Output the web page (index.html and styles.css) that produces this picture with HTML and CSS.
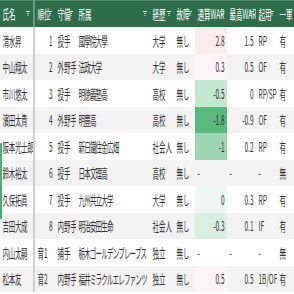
FILE: index.html
```html
<!DOCTYPE html>
<html lang="ja">
<head>
<meta charset="utf-8">
<link rel="stylesheet" href="styles.css">
</head>
<body>
<div class="sheet">
  <div class="row head">
    <div class="c c1">氏名<i class="f"></i></div>
    <div class="c c2">順位<i class="f"></i></div>
    <div class="c c3">守備<i class="f"></i></div>
    <div class="c c4">所属<i class="f"></i></div>
    <div class="c c5">経歴<i class="f"></i></div>
    <div class="c c6">故障<i class="f"></i></div>
    <div class="c c7">通算WAR<i class="f"></i></div>
    <div class="c c8">最高WAR<i class="f"></i></div>
    <div class="c c9">起用<i class="f"></i></div>
    <div class="c c10">一軍</div>
  </div>
  <div class="row">
    <div class="c c1">清水昇</div><div class="c c2 r">1</div><div class="c c3">投手</div><div class="c c4">國學院大學</div><div class="c c5">大学</div><div class="c c6">無し</div><div class="c c7 r p1">2.8</div><div class="c c8 r">1.5</div><div class="c c9">RP</div><div class="c c10">有</div>
  </div>
  <div class="row alt">
    <div class="c c1">中山翔太</div><div class="c c2 r">2</div><div class="c c3">外野手</div><div class="c c4">法政大学</div><div class="c c5">大学</div><div class="c c6">無し</div><div class="c c7 r p2">0.3</div><div class="c c8 r">0.5</div><div class="c c9">OF</div><div class="c c10">有</div>
  </div>
  <div class="row">
    <div class="c c1">市川悠太</div><div class="c c2 r">3</div><div class="c c3">投手</div><div class="c c4">明徳義塾高</div><div class="c c5">高校</div><div class="c c6">無し</div><div class="c c7 r g2">-0.5</div><div class="c c8 r">0</div><div class="c c9">RP/SP</div><div class="c c10">有</div>
  </div>
  <div class="row alt">
    <div class="c c1">濱田太貴</div><div class="c c2 r">4</div><div class="c c3">外野手</div><div class="c c4">明豊高</div><div class="c c5">高校</div><div class="c c6">無し</div><div class="c c7 r g4">-1.8</div><div class="c c8 r">-0.9</div><div class="c c9">OF</div><div class="c c10">有</div>
  </div>
  <div class="row">
    <div class="c c1">阪本光士郎</div><div class="c c2 r">5</div><div class="c c3">投手</div><div class="c c4">新日鐵住金広畑</div><div class="c c5">社会人</div><div class="c c6">無し</div><div class="c c7 r g3">-1</div><div class="c c8 r">0.2</div><div class="c c9">RP</div><div class="c c10">有</div>
  </div>
  <div class="row alt">
    <div class="c c1">鈴木裕太</div><div class="c c2 r">6</div><div class="c c3">投手</div><div class="c c4">日本文理高</div><div class="c c5">高校</div><div class="c c6">無し</div><div class="c c7">-</div><div class="c c8">-</div><div class="c c9">-</div><div class="c c10">無</div>
  </div>
  <div class="row">
    <div class="c c1">久保拓眞</div><div class="c c2 r">7</div><div class="c c3">投手</div><div class="c c4">九州共立大学</div><div class="c c5">大学</div><div class="c c6">無し</div><div class="c c7 r g0">0</div><div class="c c8 r">0.3</div><div class="c c9">RP</div><div class="c c10">有</div>
  </div>
  <div class="row alt">
    <div class="c c1">吉田大成</div><div class="c c2 r">8</div><div class="c c3">内野手</div><div class="c c4">明治安田生命</div><div class="c c5">社会人</div><div class="c c6">無し</div><div class="c c7 r g1">-0.3</div><div class="c c8 r">0.1</div><div class="c c9">IF</div><div class="c c10">有</div>
  </div>
  <div class="row">
    <div class="c c1">内山太嗣</div><div class="c c2">育1</div><div class="c c3">捕手</div><div class="c c4">栃木ゴールデンブレーブス</div><div class="c c5">独立</div><div class="c c6">無し</div><div class="c c7">-</div><div class="c c8">-</div><div class="c c9">-</div><div class="c c10">無</div>
  </div>
  <div class="row alt">
    <div class="c c1">松本友</div><div class="c c2">育2</div><div class="c c3">内野手</div><div class="c c4">福井ミラクルエレファンツ</div><div class="c c5">独立</div><div class="c c6">無し</div><div class="c c7 r p2">0.5</div><div class="c c8 r">0.5</div><div class="c c9">1B/OF</div><div class="c c10">有</div>
  </div>
  <div class="thumb"></div>
</div>
</body>
</html>
```

FILE: styles.css
```css
html, body {
  margin: 0;
  padding: 0;
  overflow: hidden;
  background: #ffffff;
}
.sheet {
  position: relative;
  width: 640px;
  transform: scaleX(0.5);
  transform-origin: 0 0;
  font-family: "Noto Sans CJK JP", "Noto Sans", sans-serif;
  font-size: 13px;
  color: #333333;
}
.row {
  display: grid;
  grid-template-columns: 70px 40px 42px 148px 48px 42px 64px 58px 42px 86px;
  height: 26.5px;
  background: #ffffff;
}
.row.alt { background: #f3f3f3; }
.row.head {
  height: 27px;
  background: #2f6d4a;
  color: #ffffff;
  box-shadow: inset 0 1px 0 #4f8d68;
}
.c {
  display: flex;
  align-items: center;
  padding: 0 5px;
  white-space: nowrap;
  overflow: hidden;
  position: relative;
}
.c.r { justify-content: flex-end; }
.c1 {
  border-right: 4px solid #cfcfcf;
  letter-spacing: -0.6px;
}
.c4 {
  letter-spacing: -1.6px;
  padding-right: 0;
}
.head .c1 { border-right-color: #6f9a80; }
.head .c { justify-content: flex-start; letter-spacing: 0; }
.f {
  position: absolute;
  right: 6px;
  top: 11px;
  width: 8px;
  height: 6px;
  background:
    linear-gradient(#dfe9e3, #dfe9e3) 0 0 / 8px 1px no-repeat,
    linear-gradient(#dfe9e3, #dfe9e3) 2px 2px / 4px 1px no-repeat,
    linear-gradient(#dfe9e3, #dfe9e3) 3px 4px / 2px 1px no-repeat;
}
.p1 { background: #fbecec; }
.p2 { background: #fdf5f5; }
.g0 { background: #eef8f2; }
.g1 { background: #d9f0e1; }
.g2 { background: #c3e7cf; }
.g3 { background: #9dd6b0; }
.g4 { background: #5bb87f; }
.thumb {
  position: absolute;
  left: 0;
  top: 143px;
  width: 4px;
  height: 76px;
  background: #4caf72;
}
```
